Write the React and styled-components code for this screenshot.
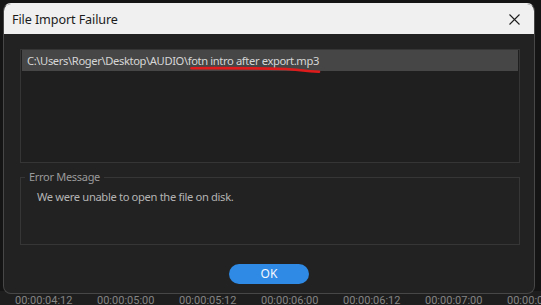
import React from "react";
import styled, { createGlobalStyle } from "styled-components";

const GlobalStyle = createGlobalStyle`
  html, body { margin: 0; padding: 0; background: #161616; }
  body { font-family: "Noto Sans", "Open Sans", sans-serif; }
  * { box-sizing: border-box; }
`;

const Screen = styled.div`
  position: relative;
  width: 541px;
  height: 305px;
  overflow: hidden;
  background: #151515;
  display: flex;
  flex-direction: column;
`;

const Workspace = styled.div`
  flex: 1;
  background: #141414;
`;

const Ruler = styled.div`
  height: 14px;
  background: #1e1e1e;
  display: flex;
  padding-left: 15px;
  overflow: hidden;
`;

const Tick = styled.span`
  width: 82px;
  flex: none;
  font-family: Roboto, "Liberation Sans", sans-serif;
  font-size: 11px;
  line-height: 14px;
  color: #858585;
  margin-top: 3px;
  white-space: nowrap;
`;

const Dialog = styled.div`
  position: absolute;
  left: 3px;
  top: 3px;
  width: 532px;
  height: 291px;
  border: 1px solid #474747;
  border-top-color: #efefef;
  border-radius: 8px;
  background: #222222;
  overflow: hidden;
  display: flex;
  flex-direction: column;
`;

const TitleBar = styled.div`
  height: 30px;
  flex: none;
  background: #f0f0f0;
  display: flex;
  align-items: center;
  justify-content: space-between;
  padding: 0 10px 0 8px;
`;

const Title = styled.span`
  font-size: 12.6px;
  color: #1b1b1b;
  letter-spacing: -0.1px;
`;

const Close = styled.button`
  width: 20px;
  height: 20px;
  border: none;
  background: transparent;
  padding: 0;
  display: flex;
  align-items: center;
  justify-content: center;
`;

const Body = styled.div`
  flex: 1;
  display: flex;
  flex-direction: column;
  padding: 15px 14px 0 16px;
`;

const FileList = styled.div`
  height: 114px;
  border: 1px solid #353535;
  background: #1f1f1f;
  padding: 0 1px;
`;

const FileRow = styled.div`
  position: relative;
  height: 21px;
  background: #464646;
  color: #d6d6d6;
  font-size: 11.2px;
  line-height: 21px;
  padding-left: 5px;
  letter-spacing: -0.38px;
  white-space: nowrap;
`;

const Scribble = styled.svg`
  position: absolute;
  left: 168px;
  top: 16px;
  overflow: visible;
`;

const Group = styled.fieldset`
  margin: 7px 0 0 0;
  height: 75px;
  border: 1px solid #363636;
  padding: 6px 0 0 16px;
  min-width: 0;
`;

const Legend = styled.legend`
  margin-left: -12px;
  padding: 0 4px;
  font-size: 11px;
  line-height: 14px;
  letter-spacing: -0.3px;
  color: #9a9a9a;
`;

const Message = styled.div`
  font-size: 11.2px;
  line-height: 14px;
  letter-spacing: -0.35px;
  color: #b4b4b4;
`;

const Footer = styled.div`
  display: flex;
  justify-content: center;
  padding-top: 19px;
  padding-right: 2px;
`;

const OkButton = styled.button`
  width: 80px;
  height: 20px;
  border: none;
  border-radius: 10px;
  background: #2e8ae4;
  color: #f4f8ff;
  font-family: "Noto Sans", sans-serif;
  font-size: 12px;
  line-height: 20px;
  padding: 0;
`;

const ticks = [
  "00:00:04:12",
  "00:00:05:00",
  "00:00:05:12",
  "00:00:06:00",
  "00:00:06:12",
  "00:00:07:00",
  "00:00:07:12",
];

export default function App() {
  return (
    <>
      <GlobalStyle />
      <Screen>
        <Workspace />
        <Ruler>
          {ticks.map((t) => (
            <Tick key={t}>{t}</Tick>
          ))}
        </Ruler>
        <Dialog>
          <TitleBar>
            <Title>File Import Failure</Title>
            <Close aria-label="Close">
              <svg width="11" height="11" viewBox="0 0 11 11">
                <path d="M0.5 0.5 L10.5 10.5 M10.5 0.5 L0.5 10.5" stroke="#1f1f1f" strokeWidth="1.1" fill="none" />
              </svg>
            </Close>
          </TitleBar>
          <Body>
            <FileList>
              <FileRow>
                C:\Users\Roger\Desktop\AUDIO\fotn intro after export.mp3
                <Scribble width="132" height="8" viewBox="0 0 132 8">
                  <path
                    d="M1.5 2.2 C30 2 70 2.3 96 3 C108 3.3 114 5.4 129 5.8"
                    stroke="#e01b1b"
                    strokeWidth="2.6"
                    strokeLinecap="round"
                    fill="none"
                  />
                </Scribble>
              </FileRow>
            </FileList>
            <Group>
              <Legend>Error Message</Legend>
              <Message>We were unable to open the file on disk.</Message>
            </Group>
            <Footer>
              <OkButton>OK</OkButton>
            </Footer>
          </Body>
        </Dialog>
      </Screen>
    </>
  );
}
